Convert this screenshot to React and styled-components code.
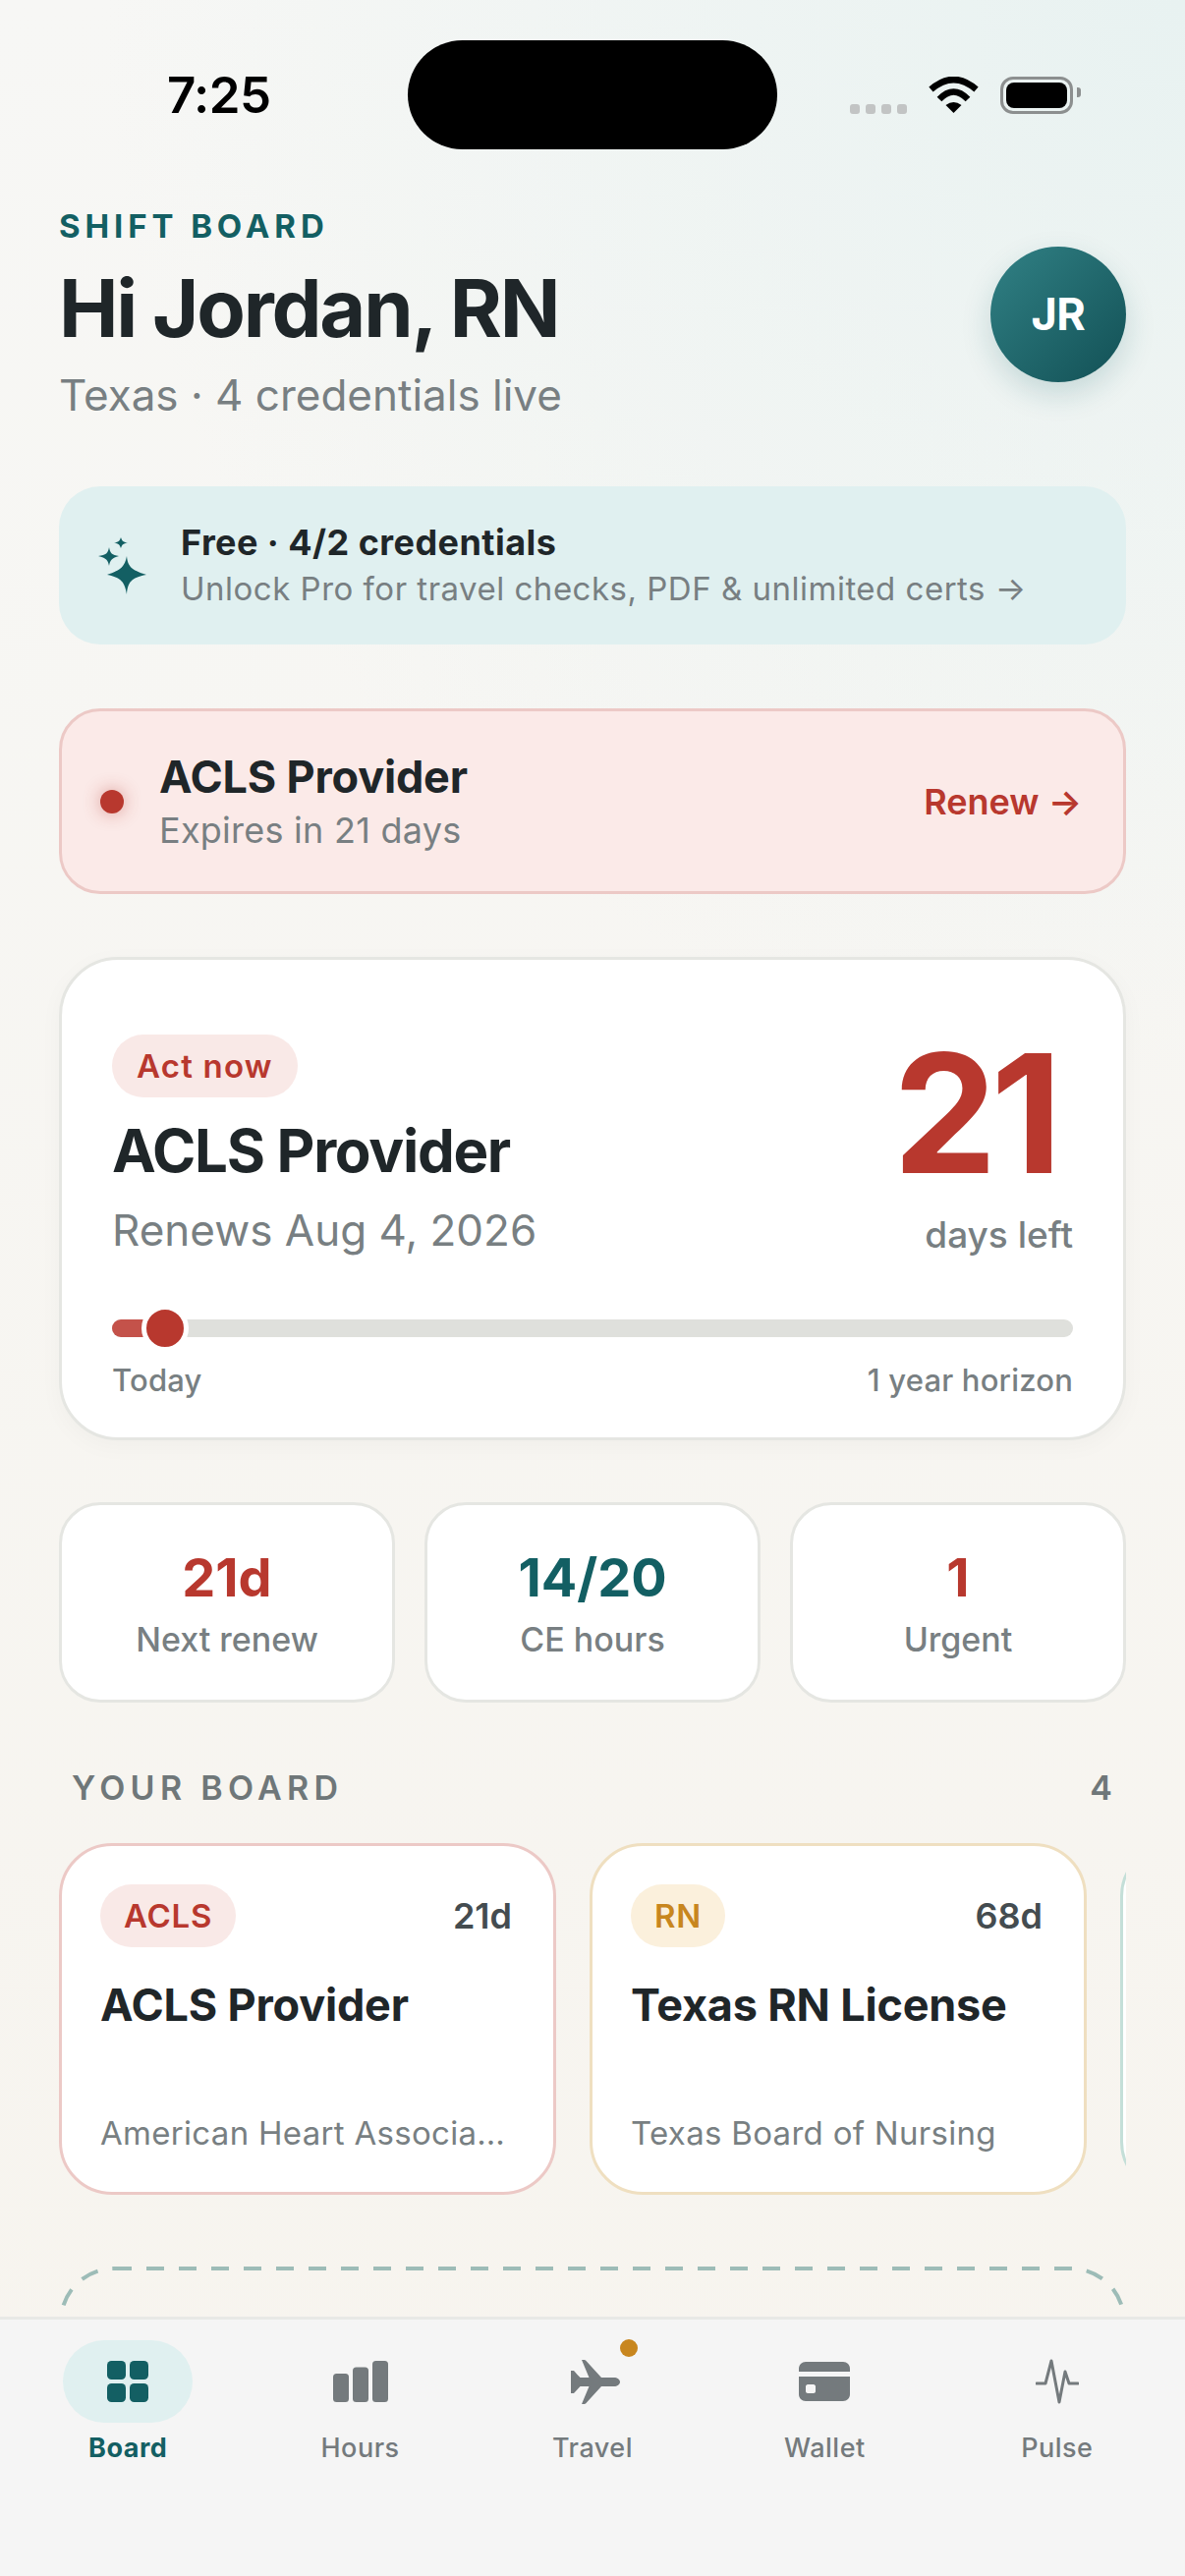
import React from 'react'
import styled, { createGlobalStyle } from 'styled-components'

const GlobalStyle = createGlobalStyle`
  * { box-sizing: border-box; }
  html, body { margin: 0; padding: 0; }
  body { font-family: Inter, "Liberation Sans", sans-serif; color: #1f2629; }
`

const tones = {
  red: { text: '#b8382e', soft: '#f9e9e7', line: '#ecc9c6' },
  amber: { text: '#c8861e', soft: '#fbf0dc', line: '#efdfc0' },
  teal: { text: '#135f63', soft: '#e0f0f0', line: '#c4dfd8' },
}

const stats = [
  { value: '21d', label: 'Next renew', tone: 'red' },
  { value: '14/20', label: 'CE hours', tone: 'teal' },
  { value: '1', label: 'Urgent', tone: 'red' },
]

const boardCards = [
  { tag: 'ACLS', days: '21d', title: 'ACLS Provider', issuer: 'American Heart Association', tone: 'red' },
  { tag: 'RN', days: '68d', title: 'Texas RN License', issuer: 'Texas Board of Nursing', tone: 'amber' },
]

function GridIcon() {
  return (
    <svg width="42" height="42" viewBox="0 0 42 42" fill="currentColor">
      <rect x="0" y="0" width="19" height="19" rx="4.5" />
      <rect x="23" y="0" width="19" height="19" rx="4.5" />
      <rect x="0" y="23" width="19" height="19" rx="4.5" />
      <rect x="23" y="23" width="19" height="19" rx="4.5" />
    </svg>
  )
}

function BarsIcon() {
  return (
    <svg width="56" height="42" viewBox="0 0 56 42" fill="currentColor">
      <rect x="0" y="13" width="16" height="29" rx="3.5" />
      <rect x="20" y="6.5" width="16" height="35.5" rx="3.5" />
      <rect x="40" y="0" width="16" height="42" rx="3.5" />
    </svg>
  )
}

function PlaneIcon() {
  return (
    <PlaneSvg width="50" height="45" viewBox="0 0 50 45" fill="currentColor">
      <path d="M50 22.5C50 20 47 18 44 18H31L15.5 1C15 .4 14 0 13 0H11L18.5 18H9.5L6.5 15L3.5 11.5C3 11 2.5 11 2 11H0V34H2C2.5 34 3 34 3.5 33.5L9.5 27H18.5L11 45H13C14 45 15 44.6 15.5 44L31 27H44C47 27 50 25 50 22.5Z" />
    </PlaneSvg>
  )
}

function WalletIcon() {
  return (
    <svg width="52" height="40" viewBox="0 0 52 40" fill="currentColor">
      <path d="M0 7C0 3 3 0 7 0H45C49 0 52 3 52 7V10H0Z" />
      <path fillRule="evenodd" d="M0 15H52V33C52 37 49 40 45 40H7C3 40 0 37 0 33ZM9 23C8 23 7 24 7 25V30C7 31 8 32 9 32H15C16 32 17 31 17 30V25C17 24 16 23 15 23Z" />
    </svg>
  )
}

function PulseIcon() {
  return (
    <svg width="44" height="46" viewBox="0 0 44 46" fill="none" stroke="currentColor" strokeWidth="3" strokeLinecap="round" strokeLinejoin="round">
      <path d="M1 25H10L16 2L24 44L30 13L34 25H43" />
    </svg>
  )
}

const tabs = [
  { label: 'Board', Icon: GridIcon, active: true },
  { label: 'Hours', Icon: BarsIcon },
  { label: 'Travel', Icon: PlaneIcon, badge: true },
  { label: 'Wallet', Icon: WalletIcon },
  { label: 'Pulse', Icon: PulseIcon },
]

export default function App() {
  return (
    <Screen>
      <GlobalStyle />
      <Island />
      <Content>
        <StatusBar>
          <Time>7:25</Time>
          <StatusIcons>
            <SignalDots>
              <i /><i /><i /><i />
            </SignalDots>
            <svg width="51" height="37" viewBox="0 0 51 37">
              <path d="M2.5 13Q25.5 -7 48.5 13" fill="none" stroke="#000" strokeWidth="6.5" />
              <path d="M11 23Q25.5 8 40 23" fill="none" stroke="#000" strokeWidth="6.5" />
              <path d="M17.5 29Q25.5 23 33.5 29L25.5 37Z" fill="#000" />
            </svg>
            <Battery>
              <BatteryFill />
            </Battery>
          </StatusIcons>
        </StatusBar>

        <Header>
          <HeaderText>
            <Eyebrow>SHIFT BOARD</Eyebrow>
            <Greeting>Hi Jordan, RN</Greeting>
            <Subhead>Texas · 4 credentials live</Subhead>
          </HeaderText>
          <Avatar>JR</Avatar>
        </Header>

        <PromoBanner>
          <svg width="50" height="58" viewBox="0 0 50 58" fill="#135f63">
            <path d="M29 19C30 29 33 33 49 38C33 41 30 46 29 58C27 46 24 41 9 38C24 33 27 29 29 19Z" />
            <path d="M11 10C12 16 14 18 21 19C14 21 12 23 11 29C10 23 8 21 0 19C8 18 10 16 11 10Z" />
            <path d="M23 0C24 3 25 5 30 5.5C25 6 24 8 23 11C22 8 21 6 16 5.5C21 5 22 3 23 0Z" />
          </svg>
          <div>
            <PromoTitle>Free · 4/2 credentials</PromoTitle>
            <PromoText>Unlock Pro for travel checks, PDF &amp; unlimited certs →</PromoText>
          </div>
        </PromoBanner>

        <AlertBanner>
          <AlertDot />
          <AlertBody>
            <CardTitle>ACLS Provider</CardTitle>
            <AlertText>Expires in 21 days</AlertText>
          </AlertBody>
          <RenewLink>Renew →</RenewLink>
        </AlertBanner>

        <HeroCard>
          <HeroTop>
            <div>
              <Pill tone="red">Act now</Pill>
              <HeroTitle>ACLS Provider</HeroTitle>
              <HeroDate>Renews Aug 4, 2026</HeroDate>
            </div>
            <HeroCount>
              <BigNumber>21</BigNumber>
              <DaysLeft>days left</DaysLeft>
            </HeroCount>
          </HeroTop>
          <Track>
            <TrackFill style={{ width: `${(55 / 977) * 100}%` }} />
          </Track>
          <TrackLabels>
            <span>Today</span>
            <span>1 year horizon</span>
          </TrackLabels>
        </HeroCard>

        <StatsRow>
          {stats.map((stat) => (
            <StatCard key={stat.label}>
              <StatValue tone={stat.tone}>{stat.value}</StatValue>
              <StatLabel>{stat.label}</StatLabel>
            </StatCard>
          ))}
        </StatsRow>

        <SectionHead>
          <span>YOUR BOARD</span>
          <SectionCount>4</SectionCount>
        </SectionHead>

        <Rail>
          {boardCards.map((card) => (
            <BoardCard key={card.tag} tone={card.tone}>
              <BoardTop>
                <BoardTag tone={card.tone}>{card.tag}</BoardTag>
                <BoardDays>{card.days}</BoardDays>
              </BoardTop>
              <BoardTitle>{card.title}</BoardTitle>
              <BoardIssuer>{card.issuer}</BoardIssuer>
            </BoardCard>
          ))}
          <BoardCard tone="teal" />
        </Rail>

        <AddCard>
          <svg width="1086" height="240" viewBox="0 0 1086 240" fill="none">
            <rect x="2" y="2" width="1082" height="236" rx="54" stroke="#9dbcb7" strokeWidth="4" strokeDasharray="18 15" />
          </svg>
        </AddCard>
      </Content>

      <TabBar>
        {tabs.map(({ label, Icon, active, badge }) => (
          <Tab key={label} active={active}>
            <TabIcon active={active}>
              <Icon />
              {badge && <TabBadge />}
            </TabIcon>
            {label}
          </Tab>
        ))}
      </TabBar>
    </Screen>
  )
}

const Screen = styled.div`
  position: relative;
  width: 1206px;
  height: 2622px;
  display: flex;
  flex-direction: column;
  overflow: hidden;
  background:
    radial-gradient(circle at 100% 0, #e8f2f1 0, rgba(232, 242, 241, 0) 1100px),
    linear-gradient(180deg, #f7f7f5 0, #f7f4ee 100%);
`

const Island = styled.div`
  position: absolute;
  top: 41px;
  left: 415px;
  width: 376px;
  height: 111px;
  border-radius: 56px;
  background: #000;
`

const Content = styled.div`
  flex: 1;
  min-height: 0;
  overflow: hidden;
  padding: 0 60px;
`

const StatusBar = styled.div`
  height: 194px;
  display: flex;
  justify-content: space-between;
  align-items: flex-start;
  padding: 67px 54px 0 110px;
`

const Time = styled.div`
  font-size: 51px;
  line-height: 60px;
  font-weight: 600;
  letter-spacing: -0.6px;
  color: #000;
`

const StatusIcons = styled.div`
  display: flex;
  align-items: flex-start;
  gap: 22px;
  padding-top: 11px;

  svg {
    display: block;
  }
`

const SignalDots = styled.div`
  display: flex;
  gap: 6px;
  padding-top: 28px;

  i {
    width: 10px;
    height: 10px;
    border-radius: 3px;
    background: #c2c4c4;
  }
`

const Battery = styled.div`
  position: relative;
  width: 74px;
  height: 38px;
  padding: 3px;
  border: 3px solid #8c8f8f;
  border-radius: 13px;

  &::after {
    content: '';
    position: absolute;
    top: 8px;
    right: -11px;
    width: 4px;
    height: 10px;
    border-radius: 0 3px 3px 0;
    background: #8c8f8f;
  }
`

const BatteryFill = styled.div`
  height: 100%;
  border-radius: 8px;
  background: #000;
`

const Header = styled.header`
  display: flex;
  justify-content: space-between;
  align-items: center;
  height: 251px;
  margin-bottom: 50px;
`

const HeaderText = styled.div`
  padding-top: 1px;
`

const Eyebrow = styled.div`
  font-size: 33px;
  line-height: 40px;
  font-weight: 700;
  letter-spacing: 4.9px;
  color: #135f63;
`

const Greeting = styled.h1`
  margin: 16px 0 0;
  font-size: 81px;
  line-height: 96px;
  font-weight: 700;
  letter-spacing: -2.2px;
  color: #1f2629;
`

const Subhead = styled.div`
  margin-top: 12px;
  font-size: 44px;
  line-height: 56px;
  color: #787f82;
`

const Avatar = styled.div`
  width: 138px;
  height: 138px;
  display: flex;
  align-items: center;
  justify-content: center;
  border-radius: 50%;
  font-size: 45px;
  font-weight: 700;
  letter-spacing: -0.5px;
  color: #fff;
  background: linear-gradient(135deg, #318185, #125055);
  box-shadow: 0 12px 30px rgba(19, 95, 99, 0.18);
`

const PromoBanner = styled.section`
  height: 161px;
  display: flex;
  align-items: center;
  gap: 34px;
  padding: 0 40px;
  margin-bottom: 65px;
  border-radius: 42px;
  background: #e0f0f0;
`

const PromoTitle = styled.div`
  margin-top: -2px;
  font-size: 36px;
  line-height: 44px;
  font-weight: 700;
  letter-spacing: 0.45px;
  color: #1f2629;
`

const PromoText = styled.div`
  margin-top: 5px;
  font-size: 33px;
  line-height: 40px;
  letter-spacing: 0.5px;
  color: #787f82;
`

const AlertBanner = styled.section`
  height: 189px;
  display: flex;
  align-items: center;
  gap: 36px;
  padding: 0 42px 0 39px;
  margin-bottom: 64px;
  border: 3px solid #ecc9c6;
  border-radius: 42px;
  background: #fbeae8;
`

const AlertDot = styled.span`
  width: 24px;
  height: 24px;
  border-radius: 50%;
  background: #b8382e;
  box-shadow: 0 0 18px rgba(184, 56, 46, 0.45);
`

const AlertBody = styled.div`
  flex: 1;
`

const CardTitle = styled.div`
  font-size: 45px;
  line-height: 56px;
  font-weight: 700;
  letter-spacing: -0.2px;
  color: #1f2629;
`

const AlertText = styled.div`
  margin-top: 3px;
  font-size: 36px;
  line-height: 46px;
  letter-spacing: 0.25px;
  color: #787f82;
`

const RenewLink = styled.span`
  font-size: 36px;
  font-weight: 600;
  color: #b8382e;
`

const HeroCard = styled.section`
  height: 492px;
  padding: 76px 51px 0;
  margin-bottom: 63px;
  border: 3px solid #e5e6e2;
  border-radius: 60px;
  background: #fff;
  box-shadow: 0 6px 24px rgba(31, 38, 41, 0.03);
`

const HeroTop = styled.div`
  display: flex;
  justify-content: space-between;
  height: 290px;
`

const Pill = styled.span`
  display: inline-flex;
  align-items: center;
  height: 64px;
  padding: 0 25px;
  border-radius: 32px;
  font-size: 33px;
  font-weight: 600;
  letter-spacing: 1.2px;
  color: ${(props) => tones[props.tone].text};
  background: ${(props) => tones[props.tone].soft};
`

const HeroTitle = styled.h2`
  margin: 19px 0 0;
  font-size: 60px;
  line-height: 70px;
  font-weight: 700;
  letter-spacing: -1.3px;
  color: #1f2629;
`

const HeroDate = styled.div`
  margin-top: 18px;
  font-size: 44px;
  line-height: 56px;
  color: #787f82;
`

const HeroCount = styled.div`
  text-align: right;
`

const BigNumber = styled.div`
  font-size: 168px;
  line-height: 168px;
  font-weight: 700;
  letter-spacing: -6px;
  padding-right: 17px;
  margin-top: -4px;
  color: #b8382e;
`

const DaysLeft = styled.div`
  margin-top: 17px;
  font-size: 37px;
  line-height: 46px;
  font-weight: 500;
  color: #787f82;
`

const Track = styled.div`
  position: relative;
  height: 18px;
  border-radius: 9px;
  background: #dfe0dc;
`

const TrackFill = styled.div`
  position: relative;
  height: 100%;
  border-radius: 9px 0 0 9px;
  background: #c4524a;

  &::after {
    content: '';
    position: absolute;
    top: 50%;
    right: -23px;
    width: 38px;
    height: 38px;
    transform: translateY(-50%);
    border: 5px solid #fff;
    border-radius: 50%;
    background: #b8382e;
  }
`

const TrackLabels = styled.div`
  display: flex;
  justify-content: space-between;
  margin-top: 24px;
  font-size: 31px;
  line-height: 40px;
  font-weight: 500;
  letter-spacing: 0.2px;
  color: #787f82;
`

const StatsRow = styled.section`
  display: grid;
  grid-template-columns: repeat(3, 1fr);
  gap: 30px;
  margin-bottom: 64px;
`

const StatCard = styled.div`
  height: 204px;
  display: flex;
  flex-direction: column;
  align-items: center;
  justify-content: center;
  border: 3px solid #e5e6e2;
  border-radius: 42px;
  background: #fff;
`

const StatValue = styled.div`
  font-size: 54px;
  line-height: 66px;
  font-weight: 700;
  color: ${(props) => tones[props.tone].text};
`

const StatLabel = styled.div`
  margin-top: 9px;
  font-size: 34px;
  line-height: 42px;
  font-weight: 500;
  color: #787f82;
`

const SectionHead = styled.div`
  display: flex;
  justify-content: space-between;
  align-items: center;
  height: 44px;
  padding: 0 14px 0 13px;
  margin-bottom: 35px;
  font-size: 34px;
  font-weight: 600;
  letter-spacing: 5.3px;
  color: #6f7779;
`

const SectionCount = styled.span`
  letter-spacing: 0;
`

const Rail = styled.section`
  display: flex;
  gap: 34px;
  overflow: hidden;
  margin-bottom: 73px;
`

const BoardCard = styled.article`
  flex: 0 0 506px;
  min-width: 0;
  height: 358px;
  display: flex;
  flex-direction: column;
  padding: 39px 42px 39px 39px;
  border: 3px solid ${(props) => tones[props.tone].line};
  border-radius: 54px;
  background: #fff;
`

const BoardTop = styled.div`
  display: flex;
  justify-content: space-between;
  align-items: center;
`

const BoardTag = styled.span`
  display: inline-flex;
  align-items: center;
  height: 64px;
  padding: 0 24px;
  border-radius: 32px;
  font-size: 33px;
  font-weight: 600;
  letter-spacing: 0.8px;
  color: ${(props) => tones[props.tone].text};
  background: ${(props) => tones[props.tone].soft};
`

const BoardDays = styled.span`
  font-size: 36px;
  font-weight: 600;
  color: #444c50;
`

const BoardTitle = styled(CardTitle)`
  margin-top: 31px;
`

const BoardIssuer = styled.div`
  margin-top: auto;
  overflow: hidden;
  white-space: nowrap;
  text-overflow: ellipsis;
  font-size: 33px;
  line-height: 42px;
  letter-spacing: 0.3px;
  color: #787f82;
`

const AddCard = styled.section`
  height: 240px;

  svg {
    display: block;
  }
`

const TabBar = styled.nav`
  flex: 0 0 264px;
  display: grid;
  grid-template-columns: repeat(5, 1fr);
  align-items: start;
  padding: 21px 12px 0;
  border-top: 3px solid #e8e9e6;
  background: #f5f5f5;
`

const Tab = styled.div`
  display: flex;
  flex-direction: column;
  align-items: center;
  gap: 8px;
  font-size: 27px;
  line-height: 36px;
  font-weight: ${(props) => (props.active ? 700 : 500)};
  letter-spacing: 0.5px;
  color: ${(props) => (props.active ? '#135f63' : '#747a7d')};
`

const TabIcon = styled.div`
  position: relative;
  width: 132px;
  height: 84px;
  display: flex;
  align-items: center;
  justify-content: center;
  border-radius: 42px;
  background: ${(props) => (props.active ? '#e0f0f0' : 'transparent')};
`

const PlaneSvg = styled.svg`
  margin-left: 6px;
`

const TabBadge = styled.span`
  position: absolute;
  top: -1px;
  right: 20px;
  width: 18px;
  height: 18px;
  border-radius: 50%;
  background: #c8861e;
`
